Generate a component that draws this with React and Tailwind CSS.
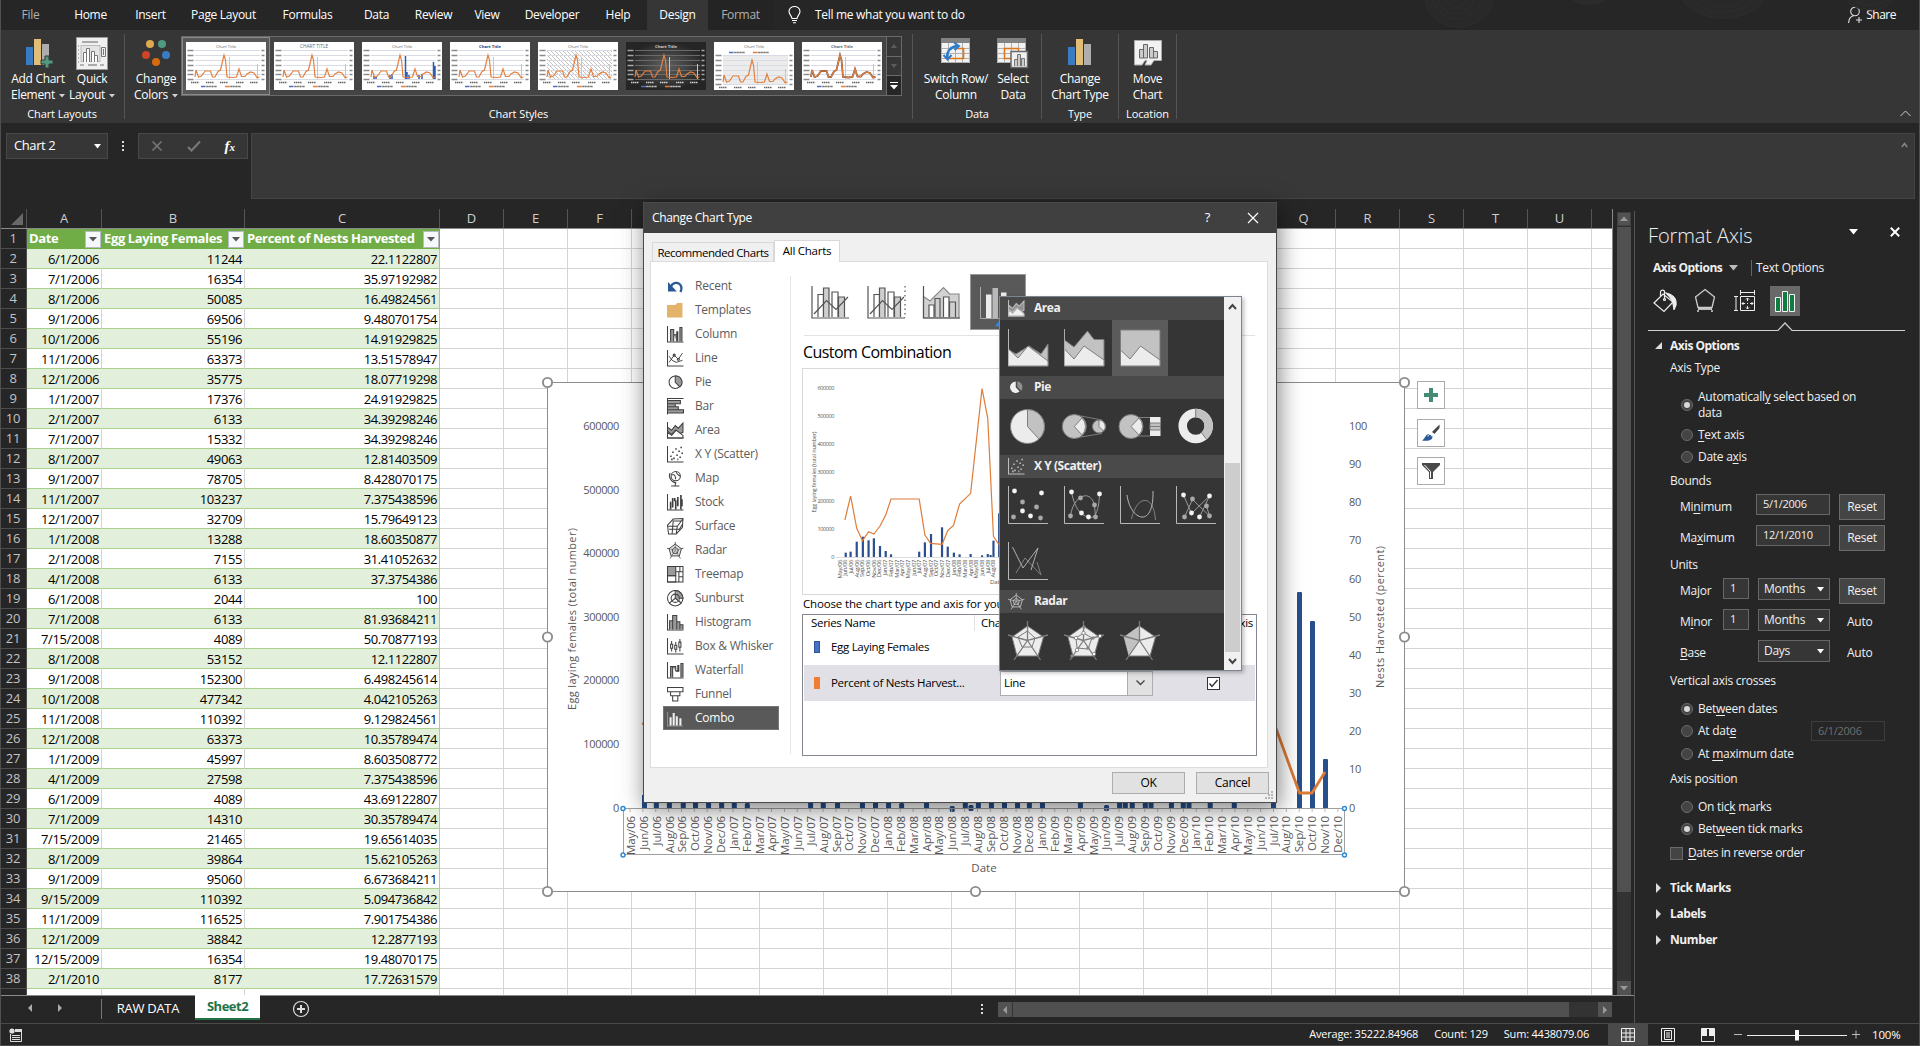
import React from "react";

const ROWS = `6/1/2006 11244 22.1122807
7/1/2006 16354 35.97192982
8/1/2006 50085 16.49824561
9/1/2006 69506 9.480701754
10/1/2006 55196 14.91929825
11/1/2006 63373 13.51578947
12/1/2006 35775 18.07719298
1/1/2007 17376 24.91929825
2/1/2007 6133 34.39298246
7/1/2007 15332 34.39298246
8/1/2007 49063 12.81403509
9/1/2007 78705 8.428070175
11/1/2007 103237 7.375438596
12/1/2007 32709 15.79649123
1/1/2008 13288 18.60350877
2/1/2008 7155 31.41052632
4/1/2008 6133 37.3754386
6/1/2008 2044 100
7/1/2008 6133 81.93684211
7/15/2008 4089 50.70877193
8/1/2008 53152 12.1122807
9/1/2008 152300 6.498245614
10/1/2008 477342 4.042105263
11/1/2008 110392 9.129824561
12/1/2008 63373 10.35789474
1/1/2009 45997 8.603508772
4/1/2009 27598 7.375438596
6/1/2009 4089 43.69122807
7/1/2009 14310 30.35789474
7/15/2009 21465 19.65614035
8/1/2009 39864 15.62105263
9/1/2009 95060 6.673684211
9/15/2009 110392 5.094736842
11/1/2009 116525 7.901754386
12/1/2009 38842 12.2877193
12/15/2009 16354 19.48070175
2/1/2010 8177 17.72631579`.split("\n").map((r) => r.split(" "));

const MONTHS = ["Jan", "Feb", "Mar", "Apr", "May", "Jun", "Jul", "Aug", "Sep", "Oct", "Nov", "Dec"];
const AXIS = Array.from({ length: 56 }, (_, i) => {
  const m = i + 4;
  return `${MONTHS[m % 12]}/${String(6 + Math.floor(m / 12)).padStart(2, "0")}`;
});

/* ---------- title row ---------- */
const TABS = [
  ["File", "w-[59px] text-[#b0b0b0]"],
  ["Home", "w-[61px]"],
  ["Insert", "w-[59px]"],
  ["Page Layout", "w-[87px]"],
  ["Formulas", "w-[81px]"],
  ["Data", "w-[57px]"],
  ["Review", "w-[57px]"],
  ["View", "w-[50px]"],
  ["Developer", "w-[80px]"],
  ["Help", "w-[52px]"],
];

function TopTabs() {
  return (
    <div className="relative flex h-[30px] shrink-0 items-center overflow-hidden text-[12px] tracking-[-0.3px]">
      <svg className="absolute right-0 top-0" width="560" height="30" fill="none" stroke="#2e2e2e">
        <ellipse cx="99" cy="-4" rx="34" ry="31" fill="#292929" />
        <ellipse cx="97" cy="-6" rx="25" ry="25" />
        <ellipse cx="96" cy="-6" rx="18" ry="20" />
        <ellipse cx="96" cy="-7" rx="12" ry="14" />
        <ellipse cx="229" cy="-8" rx="22" ry="12" fill="#2b2b2b" />
        <ellipse cx="363" cy="-8" rx="42" ry="26" fill="#292929" />
        <ellipse cx="363" cy="-10" rx="33" ry="22" />
        <ellipse cx="363" cy="-10" rx="24" ry="17" />
        <ellipse cx="510" cy="-4" rx="24" ry="14" fill="#292929" />
        <ellipse cx="510" cy="-4" rx="16" ry="9" />
      </svg>
      {TABS.map(([t, c]) => (
        <div key={t} className={"flex justify-center pl-0.5 " + c}>{t}</div>
      ))}
      <div className="ml-1 flex h-full w-[61px] items-center justify-center bg-[#363636]">Design</div>
      <div className="flex h-full w-[65px] items-center justify-center bg-[#242424] text-[#b0b0b0]">Format</div>
      <svg className="ml-[15px]" width="13" height="18" viewBox="0 0 13 18" fill="none" stroke="#fff" strokeWidth="1.1">
        <path d="M4 12.500C4 10 1 8.500 1 5.500A5.500 5 0 0 1 12 5.500C12 8.500 9 10 9 12.500ZM4 14.500H9M5 16.800H8" />
      </svg>
      <div className="ml-3.5">Tell me what you want to do</div>
      <div className="ml-auto mr-[24px] flex items-center gap-1 tracking-[-0.5px]">
        <svg width="14" height="18" viewBox="0 0 14 18" fill="none" stroke="#e0e0e0" strokeWidth="1.1">
          <circle cx="7" cy="5.500" r="4.300" />
          <path d="M.6 17C.8 13 3 10.500 5.500 9.800M11 11V17M8 14H14" />
        </svg>
        Share
      </div>
    </div>
  );
}

/* ---------- ribbon ---------- */
const LINE = "9,35 10,28 12.500,35 15.500,34 19,29 24.500,29 26.500,35 29,35 32,29.500 34.500,28 38,13 39.500,18 41,35 46.500,35.500 50.500,35 53,27 55.500,34.500 59,34.500 61,32 64.500,30 68,31 71,35.500 73.500,35";

function Thumb({ kind }) {
  const dark = kind === 5;
  const low = kind === 6;
  const grid = dark ? "#6a6a6a" : "#d9dce4";
  const ink = dark ? "#d0d0d0" : "#666";
  return (
    <svg width="80" height="48" viewBox="0 0 80 48" className="shrink-0">
      <defs>
        <radialGradient id="thumbDark"><stop offset="0" stopColor="#606060" /><stop offset="1" stopColor="#252525" /></radialGradient>
        <pattern id="thumbHatch" width="4" height="4" patternUnits="userSpaceOnUse"><path d="M0 0L4 4" stroke="#aaa" strokeWidth=".7" /></pattern>
      </defs>
      <rect width="80" height="48" fill={dark ? "url(#thumbDark)" : "#fff"} />
      {kind === 4 && <rect x="9" y="8" width="65" height="29" fill="url(#thumbHatch)" />}
      {low && <rect x="9" y="14" width="65" height="28" fill="#ececec" />}
      <text x="40" y="5.800" fontSize={kind === 1 ? "4.800" : "4.200"} textAnchor="middle" fill={kind === 3 ? "#1f3864" : ink} fontWeight={kind === 3 || kind === 5 || kind === 7 ? "700" : "400"}>
        {kind === 1 ? "CHART TITLE" : "Chart Title"}
      </text>
      <g transform={low ? "translate(0 5)" : undefined}>
        {[8, 13, 18, 23, 28, 32, 37].map((y) => (
          <g key={y}>
            <path d={`M9 ${y}.5H74`} stroke={grid} strokeWidth="1" />
            <path d={`M1.500 ${y}.500H7.500M75.500 ${y}.500H78.500`} stroke={ink} strokeWidth="1.300" opacity=".75" />
          </g>
        ))}
        <path d="M43.500 15V37M71.500 22V37" stroke="#b7c8ea" strokeWidth="1" />
        {kind === 2 && (
          <path d="M12 37V34M14 37V35M28 37V33M30 37V32M43.500 37V14M45 37V30M47 37V33M57 37V33M60 37V32M71.500 37V20M73 37V24" stroke="#2f5bb0" strokeWidth="1.500" />
        )}
        {kind === 7 && <polyline points={LINE} fill="none" stroke="#7d5240" strokeWidth="1.800" />}
        <polyline points={LINE} fill="none" stroke="#e2803f" strokeWidth="1.200" />
        <path d="M5 40.500H13M20 40.500H28M34 40.500H42M50 40.500H58M64 40.500H72" stroke={ink} strokeWidth="1.500" strokeDasharray="1.500 .5" />
      </g>
      <g transform={low ? "translate(0 -34)" : undefined}>
        <path d="M15 44.500H19" stroke="#4472c4" strokeWidth="1.500" />
        <path d="M19.500 44.500H31M43.500 44.500H55" stroke={ink} strokeWidth="1.300" strokeDasharray="1.200 .4" />
        <path d="M39 44.500H43" stroke="#ed7d31" strokeWidth="1.500" />
      </g>
    </svg>
  );
}

function Caret() {
  return <svg width="6" height="4" className="ml-1 inline-block align-middle"><path d="M0 0H6L3 3.500Z" fill="#d0d0d0" /></svg>;
}

function BigButton({ icon, lines, caret, w }) {
  return (
    <div className={"flex flex-col items-center " + w}>
      <div className="mt-[2px] flex h-[34px] items-center justify-center">{icon}</div>
      <div className="mt-px whitespace-nowrap text-center text-[12px] leading-4 tracking-[-0.3px]">
        {lines[0]}<br />{lines[1]}{caret && <Caret />}
      </div>
    </div>
  );
}

function Group({ label, w, children }) {
  return (
    <div className={"flex shrink-0 flex-col justify-between border-r border-[#555] " + w}>
      <div className="flex">{children}</div>
      <div className="text-center text-[11px] leading-[10px] tracking-[-0.1px]">{label}</div>
    </div>
  );
}

const ColumnsIcon = ({ plus }) => (
  <svg width="32" height="34" viewBox="-3 -1 32 34">
    <path d="M1 10H8V28H1Z" fill="#3a7cc4" />
    <path d="M9 2H16V28H9Z" fill="#e1bd76" />
    <path d="M17 7H24V28H17Z" fill="#aeaeae" />
    {plus && <path d="M20 19H24V23H28V27H24V31H20V27H16V23H20Z" fill="#4f9a80" stroke="#363636" />}
  </svg>
);

const QuickIcon = (
  <svg width="32" height="33" viewBox="0 0 32 33" fill="none" stroke="#777">
    <rect x=".5" y=".5" width="31" height="32" fill="#f0f0f0" stroke="#999" />
    <path d="M6 5H22M12 28H21" strokeWidth="2" stroke="#aaa" />
    <path d="M2 9H3M2 13H3M2 17H3M2 21H3M2 25H3M4 28H8M24 28H28" />
    <rect x="5" y="8.500" width="19" height="16" fill="#e4e4e4" stroke="#bbb" />
    <path d="M7.500 25V15.500H10.500V25M10.500 25V11.500H13.500V25M15.500 25V14.500H18.500V25M18.500 25V18.500H21.500V25" fill="#fff" />
    <path d="M25.500 10.500H29.500V19.500H25.500ZM27.500 12V18" />
  </svg>
);
const ColorsIcon = (
  <svg width="30" height="30" viewBox="0 0 30 30">
    <circle cx="9" cy="6" r="4" fill="#dfa94f" /><circle cx="21" cy="6" r="4" fill="#4f9a80" />
    <circle cx="5" cy="17" r="4" fill="#cd4426" /><circle cx="25" cy="17" r="4" fill="#3a7cc4" />
    <circle cx="15" cy="24" r="4" fill="#d9690f" />
  </svg>
);
const TableBase = () => (
  <>
    <path d="M0 0H29V25H0Z" fill="#f2f2f2" />
    <path d="M0 0H29V5H0Z" fill="#828282" />
    <path d="M.5 5V24.500H28.500V5M0 10.500H29M0 15.500H29M0 20.500H29M7.500 5V25M14.500 5V25M21.500 5V25" stroke="#b0b0b0" fill="none" />
  </>
);
const SwitchIcon = (
  <svg width="30" height="32" viewBox="0 -1 30 32">
    <TableBase />
    <path d="M15 10.500H22.500V20.500H8" fill="none" stroke="#e0761a" strokeWidth="1.600" />
    <path d="M6 20C6 13 9 9 16 8" fill="none" stroke="#2f7ac6" strokeWidth="2.400" />
    <path d="M13 4.500L18 8L13.500 12M2.500 17L6.500 21.500L10.500 17" fill="none" stroke="#2f7ac6" strokeWidth="2" />
  </svg>
);
const SelectIcon = (
  <svg width="32" height="32" viewBox="0 -1 32 32">
    <TableBase />
    <path d="M7.500 10.500H21.500V20.500H7.500Z" fill="none" stroke="#e0761a" strokeWidth="1.500" />
    <path d="M14 13.500H30.500V29.500H14Z" fill="#f0f0f0" stroke="#6a6a6a" strokeWidth="1.500" />
    <path d="M17.500 28V21.500H20.500V28M20.500 28V16.500H23.500V28M24.500 28V20.500H27.500V28" fill="#ccc" stroke="#777" />
  </svg>
);
const MoveIcon = (
  <svg width="28" height="26" viewBox="0 0 28 26">
    <path d="M.5 .5H27.500V20.500H20L17 25H11L13 20.500H11L8 25H.5Z" fill="#f2f2f2" stroke="#aaa" />
    <path d="M5.500 18V9.500H9.500V18ZM9.500 18V4.500H13.500V18ZM15.500 18V7.500H19.500V18ZM19.500 18V11.500H23.500V18Z" fill="#ccc" stroke="#666" />
  </svg>
);

function Ribbon() {
  return (
    <div className="relative flex h-[93px] shrink-0 bg-[#363636] pb-[4px] pt-[4px]">
      <Group label="Chart Layouts" w="w-[125px]">
        <BigButton w="w-[60px] ml-[8px]" icon={<ColumnsIcon plus />} lines={["Add Chart", "Element"]} caret />
        <BigButton w="w-[48px]" icon={QuickIcon} lines={["Quick", "Layout"]} caret />
      </Group>
      <Group label="Chart Styles" w="w-[788px]">
        <BigButton w="w-[56px] pl-[6px]" icon={ColorsIcon} lines={["Change", "Colors"]} caret />
        <div className="mt-[2px] flex h-[60px] w-[721px] border border-[#6a6a6a] bg-[#444]">
          <div className="flex flex-1">
            {[0, 1, 2, 3, 4, 5, 6, 7].map((k) => (
              <div key={k} className={"flex h-[58px] w-[88px] shrink-0 items-center justify-center border " + (k === 0 ? "border-[#8a8a8a] bg-[#585858]" : "border-transparent")}>
                <Thumb kind={k} />
              </div>
            ))}
          </div>
          <div className="flex w-[15px] flex-col border-l border-[#6a6a6a] bg-[#363636]">
            <div className="flex flex-1 items-center justify-center border-b border-[#6a6a6a]"><svg width="6" height="4"><path d="M0 4H6L3 0Z" fill="#5c5c5c" /></svg></div>
            <div className="flex flex-1 items-center justify-center border-b border-[#6a6a6a]"><svg width="6" height="4"><path d="M0 0H6L3 4Z" fill="#5c5c5c" /></svg></div>
            <div className="flex flex-1 items-center justify-center bg-[#262626]"><svg width="8" height="8"><path d="M0 .5H8" stroke="#fff" /><path d="M0 3H8L4 7.500Z" fill="#fff" /></svg></div>
          </div>
        </div>
      </Group>
      <Group label="Data" w="w-[129px]">
        <BigButton w="w-[72px] ml-[7px]" icon={SwitchIcon} lines={["Switch Row/", "Column"]} />
        <BigButton w="w-[42px]" icon={SelectIcon} lines={["Select", "Data"]} />
      </Group>
      <Group label="Type" w="w-[77px]">
        <BigButton w="w-[76px]" icon={<ColumnsIcon />} lines={["Change", "Chart Type"]} />
      </Group>
      <Group label="Location" w="w-[58px]">
        <BigButton w="w-[57px]" icon={MoveIcon} lines={["Move", "Chart"]} />
      </Group>
      <svg className="mb-[2px] ml-auto mr-[9px] self-end" width="11" height="7" fill="none" stroke="#ccc"><path d="M.5 6L5.500 1L10.500 6" /></svg>
    </div>
  );
}

function FormulaBar() {
  return (
    <div className="flex h-[86px] shrink-0 items-start pl-[6px] pt-[10px]">
      <div className="flex h-[26px] w-[102px] items-center justify-between border border-[#484848] bg-[#363636] pl-[7px] pr-[6px] text-[13px] tracking-[-0.4px]">
        Chart 2
        <svg width="7" height="5"><path d="M0 0H7L3.500 4.500Z" fill="#fff" /></svg>
      </div>
      <svg className="mx-[13px] mt-[8px]" width="4" height="12" fill="#ddd"><path d="M1 0H3V2H1ZM1 4H3V6H1ZM1 8H3V10H1Z" /></svg>
      <div className="flex h-[26px] w-[110px] items-center justify-around border border-[#484848] bg-[#363636]">
        <svg width="12" height="12" fill="none" stroke="#777" strokeWidth="1.600"><path d="M1.500 1.500L10.500 10.500M10.500 1.500L1.500 10.500" /></svg>
        <svg width="14" height="12" fill="none" stroke="#777" strokeWidth="2.200"><path d="M1 7L4.500 10.500L13 1.500" /></svg>
        <span className="font-['Liberation_Serif',serif] text-[15px] font-bold italic leading-none">f<span className="text-[11px]">x</span></span>
      </div>
      <div className="ml-[3px] flex h-[66px] w-[1664px] justify-end border border-[#444] bg-[#383838] pr-[6px] pt-[8px]">
        <svg width="7" height="6" fill="none" stroke="#888" strokeWidth="1.500"><path d="M.8 5L3.500 1.500L6.200 5" /></svg>
      </div>
    </div>
  );
}

/* ---------- worksheet ---------- */
const LETTERS = "DEFGHIJKLMNOPQRSTU".split("");

function FilterButton() {
  return (
    <div className="flex h-[17px] w-[16px] shrink-0 items-center justify-center border border-[#b5bcc4] bg-[#f7f8fa]">
      <svg width="8" height="5"><path d="M0 0H8L4 4.500Z" fill="#555" /></svg>
    </div>
  );
}

function HeadCell({ w, children }) {
  return (
    <div className={"flex h-full shrink-0 items-center justify-between whitespace-nowrap border-b border-[#70ad47] bg-[#70ad47] pl-[2px] pr-px pt-px text-[13px] font-bold tracking-[-0.37px] text-white " + w}>
      {children}<FilterButton />
    </div>
  );
}

function Sheet() {
  return (
    <div className="relative h-[786px] w-[1613px] overflow-hidden border-r border-[#8a8a8a]">
      <div className="flex h-[20px] items-center border-b border-[#8a8a8a] text-[13px] text-[#cfcfcf]">
        <div className="flex h-full w-[27px] shrink-0 items-end justify-end border-r border-[#555] pb-[3px] pr-[3px]">
          <svg width="12" height="12"><path d="M12 0V12H0Z" fill="#686868" /></svg>
        </div>
        <div className="flex h-full w-[75px] shrink-0 items-center justify-center border-r border-[#555]">A</div>
        <div className="flex h-full w-[143px] shrink-0 items-center justify-center border-r border-[#555]">B</div>
        <div className="flex h-full w-[195px] shrink-0 items-center justify-center border-r border-[#555]">C</div>
        {LETTERS.map((l) => (
          <div key={l} className="flex h-full w-[64px] shrink-0 items-center justify-center border-r border-[#555]">{l}</div>
        ))}
      </div>
      {Array.from({ length: 39 }, (_, i) => {
        const r = ROWS[i - 1] || [];
        const band = i % 2 === 1;
        const cell = "flex h-full shrink-0 items-center justify-end border-b border-b-[#a9d08e] border-r pr-[2px] pt-[1.5px] text-[13px] tracking-[-0.4px] ";
        const tone = band ? "bg-[#e2efda] border-r-[#e2efda] " : "bg-white border-r-[#d4d4d4] ";
        return (
          <div key={i} className="flex h-[20px] text-black">
            <div className="flex h-full w-[27px] shrink-0 items-center justify-center border-b border-r border-[#4c4c4c] bg-[#262626] pt-px text-[13px] tracking-[-0.3px] text-[#c4c4c4]">{i < 38 ? i + 1 : ""}</div>
            {i === 0 ? (
              <>
                <HeadCell w="w-[75px]">Date</HeadCell>
                <HeadCell w="w-[143px]">Egg Laying Females</HeadCell>
                <HeadCell w="w-[195px]">Percent of Nests Harvested</HeadCell>
              </>
            ) : (
              <>
                <div className={cell + tone + "w-[75px]"}>{r[0]}</div>
                <div className={cell + tone + "w-[143px]"}>{r[1]}</div>
                <div className={"flex h-full w-[195px] shrink-0 items-center justify-end border-b border-r border-[#a9d08e] pr-[2px] pt-[1.5px] text-[13px] tracking-[-0.4px] " + (band ? "bg-[#e2efda]" : "bg-white")}>{r[2]}</div>
              </>
            )}
            {LETTERS.map((l) => (
              <div key={l} className="h-full w-[64px] shrink-0 border-b border-r border-[#d4d4d4] bg-white" />
            ))}
            <div className="h-full w-[30px] shrink-0 border-b border-[#d4d4d4] bg-white" />
          </div>
        );
      })}
    </div>
  );
}

/* ---------- embedded chart ---------- */
const STUBS = [11, 40, 72, 106, 136, 168, 200, 231, 418, 449, 484, 545, 577, 609, 702, 797, 829, 861, 893, 925, 954, 986, 1079, 1175, 1189, 1206, 1238, 1252, 1302, 1331, 1345, 1397, 1456, 1552];
const SHORT_STUBS = [[263, 803], [641, 803], [765, 806], [811, 805], [1143, 805]];

function SheetChart() {
  return (
    <svg className="absolute left-[541px] top-[376px]" width="870" height="522" viewBox="541 376 870 522">
      <rect x="547.500" y="382.500" width="857" height="509" fill="#fff" stroke="#8c8c8c" />
      <g fontSize="11" fill="#595959" letterSpacing="-.35">
        {[0, 1, 2, 3, 4, 5, 6].map((i) => (
          <text key={i} x="619" y={811.5 - i * 63.600} textAnchor="end">{i ? i + "00000" : "0"}</text>
        ))}
        {[0, 1, 2, 3, 4, 5, 6, 7, 8, 9, 10].map((i) => (
          <text key={i} x="1349" y={811.5 - i * 38.150}>{i * 10}</text>
        ))}
        <text x="984" y="872" textAnchor="middle" fontSize="11.500" letterSpacing="0">Date</text>
        <text transform="translate(576 619) rotate(-90)" textAnchor="middle" letterSpacing="0" textLength="182">Egg laying females (total number)</text>
        <text transform="translate(1384 617) rotate(-90)" textAnchor="middle" letterSpacing="0" textLength="142">Nests Harvested (percent)</text>
      </g>
      <g fill="#264f8c">
        {STUBS.map((x) => <rect key={x} x={640 + x / 2.45 - 2.500} y="795" width="5" height="13.500" />)}
        {SHORT_STUBS.map(([x, y]) => <rect key={x} x={640 + x / 2.45 - 2.500} y={y} width="5" height="6" rx="1.500" />)}
        <rect x="1297" y="592" width="5" height="217" rx="1" />
        <rect x="1310" y="621" width="5" height="188" rx="1" />
        <rect x="1323" y="759" width="5" height="50" rx="1" />
      </g>
      <path d="M643 725L648 715M1270 712L1299.500 793H1312L1325 772" fill="none" stroke="#dd7a36" strokeWidth="2.800" strokeLinejoin="round" />
      <rect x="623.500" y="808.500" width="721" height="46" fill="none" stroke="#a0a0a0" />
      <g fontSize="11.500" fill="#595959" letterSpacing="-.15">
        {AXIS.map((m, i) => (
          <g key={m}>
            <path d={`M${630 + i * 12.870} 809V812`} stroke="#bbb" />
            <text transform={`translate(${635 + i * 12.850} 816) rotate(-90)`} textAnchor="end">{m}</text>
          </g>
        ))}
      </g>
      {[[623, 808.500], [1344.500, 808.500], [623, 855], [1344.500, 855]].map(([x, y]) => (
        <circle key={x + "-" + y} cx={x} cy={y} r="2" fill="#fff" stroke="#2b87d3" strokeWidth="1.400" />
      ))}
      {[[547.500, 382.500], [1404.500, 382.500], [547.500, 637], [1404.500, 637], [547.500, 891.500], [975.500, 891.500], [1404.500, 891.500]].map(([x, y]) => (
        <circle key={x + "-" + y} cx={x} cy={y} r="4.600" fill="#fff" stroke="#8c8c8c" strokeWidth="1.900" />
      ))}
    </svg>
  );
}

function ChartButtons() {
  const box = "flex h-[28px] w-[28px] items-center justify-center border border-[#ababab] bg-white";
  return (
    <div className="absolute left-[1417px] top-[381px] flex flex-col gap-[10px]">
      <div className={box}><svg width="14" height="14"><path d="M5 0H9V5H14V9H9V14H5V9H0V5H5Z" fill="#458a72" /></svg></div>
      <div className={box}>
        <svg width="18" height="18" viewBox="0 0 18 18">
          <path d="M17.500 .5V4L12.500 10L10 8Z" fill="#444" />
          <path d="M9.500 8.500L12.500 11" stroke="#fff" />
          <path d="M0 16.500C3 15 3 10.500 7 10L10.500 12C11 16 7 17.500 0 16.500Z" fill="#2a5a96" />
          <path d="M6 12.500C6 10 9 9.500 10 12.500" fill="none" stroke="#fff" />
        </svg>
      </div>
      <div className={box}>
        <svg width="18" height="17" viewBox="0 0 18 17">
          <path d="M0 0H18V2L11 9V16H7V9L0 2Z" fill="#4a4a4a" />
          <path d="M2.500 2L8.500 8.500V15" fill="none" stroke="#fff" />
        </svg>
      </div>
    </div>
  );
}

/* ---------- category glyphs, 16x16 ---------- */
const Ax = () => <path d="M.5 0V15.500H16" />;
function Glyph({ name, lit }) {
  const ink = lit ? "#bdbdbd" : "#404040";
  const mid = lit ? "#8f8f8f" : "#9a9a9a";
  const pale = lit ? "#f0f0f0" : "#fff";
  const star = "M8 0V8L16 6M8 8L13 16M8 8L3 16M8 8L0 6";
  const g = {
    Recent: <><path d="M3.500 9.500C5 4 11 3 13.500 7.500C14.500 9.500 14 11.500 13 13.500" stroke="#2a5a96" strokeWidth="2.200" /><path d="M1 4V13H9.500Z" fill="#2a5a96" stroke="none" /></>,
    Templates: <path d="M0 3H8L10 1H15V15H0Z" fill="#e3b36b" stroke="none" />,
    Column: <><Ax /><path d="M3.500 15V3.500H6.500V15M6.500 8.500H9.500V15M9.500 15V5.500H10.500V15M12.500 15V1.500H14.500V15" fill={mid} /></>,
    Line: <><Ax /><path d="M2 12L7 5L11 9L15 3M2 6L5 10L9 12L15 10" stroke={ink} strokeWidth=".9" /><circle cx="7" cy="5" r="1" /><circle cx="11" cy="9" r="1" /></>,
    Pie: lit ? <><path d="M7.500 2.500A5.500 5.500 0 1 0 11.200 12.100L7.500 8Z" fill={pale} stroke="none" /><path d="M9 2.500A5.500 5.500 0 0 1 12.700 11.500L9 7.500Z" fill={mid} stroke="none" /></> : <><circle cx="8" cy="8" r="6" fill={pale} /><path d="M8 2V8L12.500 12.500A6 6 0 0 0 8 2Z" fill={mid} /></>,
    Bar: <><path d="M.5 0V16M0 .5H16" /><path d="M1 2.500H13V5.500H1M1 5.500H8V8.500H1M1 8.500H11V11.500H1M1 11.500H16V14.500H1" fill={mid} /></>,
    Area: <><path d="M.5 5L4.500 8L8 3.500L11 6L15.500 1V10L11 12L8 8L4.500 12L.5 9Z" fill={mid} /><path d="M.5 10L4.500 13L9 8L15.500 13V15.500H.5Z" fill={pale} /><Ax /></>,
    "X Y (Scatter)": <><Ax /><path d="M3 10H4.500M5 6H6.500M6 12H7.500M8 3H9.500M9 9H10.500M11 5H12.500M12 11H13.500M13 1.500H14.500M14 7H15.500M4 13H5.500M10 13H11" strokeWidth="1.500" /></>,
    Map: <><circle cx="8.500" cy="6" r="4.500" /><path d="M5 5C7 3 9 7 8 9M9 2C10 5 12 5 12.500 6M3 3C1 7 4 12 9 12.500M8 12.500V15M4 15.500H12" /></>,
    Stock: <><Ax /><path d="M3.500 15V8M5.500 13V4M8.500 15V6M10.500 12V3M13.500 15V1M14.500 12V5M3 8H4M7.500 4V7" strokeWidth="1.600" /></>,
    Surface: <><path d="M1.500 15.500L.5 7L6 1L15.500 .5L15 9L9 15.500ZM1 8L10 8L15.500 1M9 15L10 8M5 15L6 3L14 3M2 11L12 11L15 6" /></>,
    Radar: <><path d={star} strokeWidth=".8" /><path d="M8 2L14 6.500L12 13.500H4L2 6.500ZM8 5L11 7.500L10 11H6L5 7.500Z" strokeWidth=".9" fill={lit ? "none" : "#c5c5c5"} fillOpacity=".5" /></>,
    Treemap: <><path d="M.5 .5H15.500V15.500H.5Z" fill={pale} /><path d="M.5 .5H8.500V9.500H.5Z" fill={mid} /><path d="M.5 9.500H8.500V15.500H.5ZM8.500 5.500H15.500M11.500 5.500V15.500M11.500 10.500H15.500M12.500 .5V5" /></>,
    Sunburst: <><circle cx="8" cy="8" r="7.500" fill={pale} /><circle cx="8" cy="8" r="4" /><path d="M8 .5V8L14 13M8 8L2 13M8 .5A7.500 7.500 0 0 1 15.500 8H12A4 4 0 0 0 8 4Z" fill={mid} /></>,
    Histogram: <><path d="M.5 0V15.500H16" /><path d="M2.500 15V6.500H5.500V15M5.500 15V1.500H9.500V15M9.500 15V7.500H12.500V15M12.500 15V10.500H15.500V15" fill={mid} /></>,
    "Box & Whisker": <><Ax /><path d="M4.500 3V13M8.500 4V14M12.500 1V13" /><path d="M3.500 6H5.500V10H3.500ZM7.500 7H9.500V11H7.500ZM11.500 4H13.500V9H11.500Z" fill={pale} /></>,
    Waterfall: <><Ax /><path d="M3.500 15V4.500H5.500V15M5.500 4.500H8.500V8.500H10.500V3.500H11.500V9H8.500M13.500 15V1.500H15.500V15" fill={mid} /></>,
    Funnel: <><path d="M.5 1.500H15.500V5.500H.5ZM3.500 5.500H12.500V9.500H3.500ZM5.500 9.500H10.500V14.500H5.500Z" fill={pale} /></>,
    Combo: <><path d="M.5 2V15.500H15.500" stroke={mid} /><path d="M3.500 15V7M6.500 15V3M9.500 15V6M13 15V8" stroke={pale} strokeWidth="2" /></>,
  }[name];
  return <svg width="17" height="17" viewBox="0 0 16.500 16.500" fill="none" stroke={ink} className="shrink-0">{g}</svg>;
}

const KINDS = ["Recent", "Templates", "Column", "Line", "Pie", "Bar", "Area", "X Y (Scatter)", "Map", "Stock", "Surface", "Radar", "Treemap", "Sunburst", "Histogram", "Box & Whisker", "Waterfall", "Funnel", "Combo"];

/* ---------- combo sub-type tiles ---------- */
function ComboBars({ dashed }) {
  return (
    <svg width="56" height="56" fill="#fff" stroke="#555" strokeWidth="1.200">
      <path d="M16 43V20.500H21.500V43M30 43V18H36V43" />
      <path d="M21.500 43V14H27V43M36.500 43V23H42.500V43" fill="#cfcfcf" />
      <path d="M10 12V44H47M12 40L24.500 26.500L34 35.500L46 23" fill="none" />
      {dashed && <path d="M47 12V44" strokeDasharray="1.500 3" />}
    </svg>
  );
}

/* ---------- preview inside the dialog ---------- */
const P_LINE = [[502, 960], [516, 888], [531, 985], [545, 1022], [560, 995], [573, 1002], [588, 978], [602, 945], [615, 897], [684, 897], [698, 1005], [712, 1030], [740, 1033], [754, 992], [768, 976], [783, 912], [810, 880], [838, 566], [852, 655], [866, 1010], [882, 1038]];
const P_BARS = [[504, 1058], [516, 1055], [531, 1025], [546, 1010], [560, 1021], [573, 1015], [588, 1038], [602, 1053], [615, 1063], [684, 1055], [698, 1027], [713, 1002], [740, 982], [754, 1040], [769, 1058], [783, 1063], [810, 1062], [838, 1066], [852, 1062], [859, 1065], [866, 1022], [880, 940]];

function Preview() {
  return (
    <svg width="430" height="227" viewBox="802 368 430 227" className="block">
      <rect x="802.500" y="368.500" width="429" height="226" fill="#fff" stroke="#d9d9d9" />
      <g fill="#555" fontSize="5.500" letterSpacing="-.4">
        {[0, 1, 2, 3, 4, 5, 6].map((i) => (
          <text key={i} x="834" y={559 - i * 28.200} textAnchor="end">{i ? i + "00000" : "0"}</text>
        ))}
        {AXIS.slice(0, 28).map((m, i) => (
          <text key={m} transform={`translate(${841.500 + i * 5.700} 560) rotate(-90)`} textAnchor="end" fontSize="6">{m}</text>
        ))}
        <text x="990" y="584" fontSize="6" letterSpacing="0">Date</text>
        <text transform="translate(816 472) rotate(-90)" textAnchor="middle" fontSize="5.500" textLength="81" letterSpacing="0">Egg laying females (total number)</text>
      </g>
      <path d="M836 557.500H1010" stroke="#ddd" />
      {P_BARS.map(([x, y]) => (
        <path key={x} d={`M${640 + x / 2.45} ${200 + y / 3}V557`} stroke="#2b4f8f" strokeWidth="2.200" />
      ))}
      <polyline points={P_LINE.map(([x, y]) => `${640 + x / 2.45},${200 + y / 3}`).join(" ")} fill="none" stroke="#df7c3a" strokeWidth="1.200" />
    </svg>
  );
}

/* ---------- chart-type drop-down ---------- */
const L = "#ececec";
const G = "#c2c2c2";
const D = "#7c7c7c";
function Dots({ w, g }) {
  return (
    <g stroke="none">
      {w.map(([x, y]) => <circle key={x + "," + y} cx={x} cy={y} r="2.400" fill="#f4f4f4" />)}
      {g.map(([x, y]) => <circle key={x + "," + y} cx={x} cy={y} r="2.400" fill="#a8a8a8" />)}
    </g>
  );
}
const AxL = () => <path d="M8.500 8V45.500H48" stroke="#b8b8b8" />;
const Star = ({ rear }) => (
  <>
    <path d="M27.500 13L43.500 24L38 43H17L12 24Z" fill={L} />
    {rear && <path d="M27.500 13V27.500L17 43L12 24Z" fill={G} stroke="none" />}
    <path d="M27.500 8V27.500L48 22M27.500 27.500L40.500 47M27.500 27.500L14 47M27.500 27.500L8 22" stroke={D} strokeWidth="1.300" />
  </>
);
const TILES = {
  Area: [
    <><path d="M8.500 30L16 34L29 26L41 34L48 24V46H8.500Z" fill={G} /><path d="M8.500 29L18 38L28 26L48 41V46H8.500Z" fill={L} /><path d="M8.500 9V46" stroke="#b8b8b8" /></>,
    <><path d="M8.500 20L18 27L31.500 11L38 19.500H48V46H8.500Z" fill={G} /><path d="M8.500 29L18 39L28 26L48 40V46H8.500Z" fill={L} /><path d="M8.500 9V46" stroke="#aaa" /></>,
    <><path d="M8.500 10H48V46H8.500Z" fill={G} /><path d="M8.500 30L18 39L28.500 26L48 40V46H8.500Z" fill={L} /></>,
  ],
  Pie: [
    <><circle cx="27.500" cy="27.500" r="17" fill={L} /><path d="M27.500 10.500V27.500L39 40A17 17 0 0 0 27.500 10.500Z" fill={G} /></>,
    <><path d="M22 16.500L46 21M22 38.500L46 34.500" /><circle cx="18.300" cy="27.500" r="12" fill={G} /><path d="M18.300 27.500L26 19A12 12 0 0 1 26 36Z" fill={L} /><circle cx="43" cy="27.500" r="6.500" fill={G} /><path d="M43 27.500V21A6.500 6.500 0 0 1 47.500 32Z" fill={L} /></>,
    <><path d="M22 18.500H38M22 37H38" /><circle cx="19" cy="27.500" r="12" fill={G} /><path d="M19 27.500L27 19A12 12 0 0 1 27 36Z" fill={L} /><path d="M38 18H48.500V37H38Z" fill={L} stroke="none" /><path d="M38 24H48.500V31H38Z" fill={G} /><path d="M38 27.500H48.500" /></>,
    <><circle cx="27.700" cy="27" r="13" stroke={L} strokeWidth="8.500" /><path d="M27.700 14A13 13 0 0 1 36 37" stroke={G} strokeWidth="8.500" /><path d="M27.700 9V19M33 33L39 41" /></>,
  ],
  "X Y (Scatter)": [
    <><AxL /><Dots w={[[14.5, 13], [41.5, 15], [22.5, 33], [30.5, 38]]} g={[[22.5, 24], [36.5, 29], [13.5, 39], [40.5, 40]]} /></>,
    <><AxL /><path d="M14.500 38C17 18 34 10 38.500 27L39.500 39M15.500 14C18 28 24 38 32.500 39C40 42 43 30 43.500 16" stroke="#999" /><Dots w={[[15.5, 14], [43.5, 16], [25.5, 35], [32.5, 39]]} g={[[24.5, 20], [38.5, 27], [14.5, 38], [39.5, 39]]} /></>,
    <><AxL /><path d="M19.500 41C25 16 42 16 43.500 42" stroke="#808080" /><path d="M15 17C18 42 42 52 41 13" stroke="#b8b8b8" /></>,
    <><AxL /><path d="M16.500 39L24.500 21.500L41.500 38L38.500 28M15.500 17L23.500 35.500L41.500 18L31.500 39" stroke="#999" /><Dots w={[[15.5, 17], [41.5, 18], [23.5, 35], [31.5, 39]]} g={[[24.5, 21], [38.5, 28], [16.5, 39], [41.5, 38]]} /></>,
    <><AxL /><path d="M16 39L25 24L41 41L37 28" stroke="#808080" /><path d="M12.500 13L23 34L38 14L31 36" stroke="#b0b0b0" /></>,
  ],
  Radar: [
    <><Star /><path d="M27.500 18L35 25L32 34H22L18 24Z" /></>,
    <><Star /><path d="M27.500 20L36 25L32 36L21 35L20 25Z" /><g stroke="#777" strokeWidth=".8" fill="#fff"><circle cx="27.500" cy="20" r="1.700" /><circle cx="21" cy="37" r="1.700" /><circle cx="20" cy="25" r="1.700" /><circle cx="38" cy="41" r="1.700" /><circle cx="44" cy="23" r="1.700" /></g><g stroke="none" fill="#888"><circle cx="28" cy="14" r="1.700" /><circle cx="37" cy="25" r="1.700" /><circle cx="32" cy="35" r="1.700" /><circle cx="16" cy="43" r="1.700" /></g></>,
    <Star rear />,
  ],
};

function TypePopup() {
  return (
    <div className="absolute left-[999px] top-[296px] flex h-[375px] w-[243px] border border-[#7d8590] bg-[#353535] shadow-[2px_2px_4px_rgba(0,0,0,0.25)]">
      <div className="w-[224px]">
        {Object.entries(TILES).map(([name, tiles]) => (
          <div key={name}>
            <div className="flex h-[23px] items-center gap-[9px] bg-[#4a4a4a] pb-px pl-[8px] text-[12px] font-bold tracking-[-0.45px] text-[#f0f0f0]">
              <Glyph name={name} lit />{name}
            </div>
            <div className="flex flex-wrap">
              {tiles.map((t, i) => (
                <div key={i} className={"h-[56px] w-[56px] " + (name === "Area" && i === 2 ? "bg-[#5b5b5b]" : "")}>
                  <svg width="56" height="56" fill="none" stroke={D}>{t}</svg>
                </div>
              ))}
            </div>
          </div>
        ))}
      </div>
      <div className="flex w-[17px] flex-col items-center bg-[#f1f1f1] pt-[6px]">
        <svg width="9" height="7" fill="none" stroke="#444" strokeWidth="2"><path d="M1 6L4.500 2L8 6" /></svg>
        <div className="mt-[153px] h-[189px] w-[15px] bg-[#cdcdcd]" />
        <svg className="mt-[6px]" width="9" height="7" fill="none" stroke="#444" strokeWidth="2"><path d="M1 1L4.500 5L8 1" /></svg>
      </div>
    </div>
  );
}

/* ---------- dialog ---------- */
function Dialog() {
  return (
    <div className="absolute left-[643px] top-[202px] flex h-[601px] w-[634px] flex-col border border-[#4a4a4a] bg-[#f0f0f0] text-[12px] tracking-[-0.25px] text-black shadow-[2px_6px_22px_rgba(0,0,0,0.5)]">
      <div className="flex h-[30px] shrink-0 items-center bg-[#404040] pl-[8px] tracking-[-0.35px] text-white">
        Change Chart Type
        <span className="ml-auto mr-[37px] text-[13px]">?</span>
        <svg className="mr-[17px]" width="12" height="12" stroke="#fff" strokeWidth="1.200"><path d="M1 1L11 11M11 1L1 11" /></svg>
      </div>
      <div className="flex h-[28px] shrink-0 items-end pl-[8px]">
        <div className="flex h-[19px] w-[122px] items-center justify-center border border-b-0 border-[#d9d9d9] pt-0.5 text-[11.5px] tracking-[-0.45px]">Recommended Charts</div>
        <div className="z-10 -mb-px flex h-[22px] w-[66px] items-center justify-center border border-b-0 border-[#d9d9d9] bg-white pb-0.5 text-[11.5px]">All Charts</div>
      </div>
      <div className="mx-[6px] flex h-[507px] w-[618px] shrink-0 border border-[#dcdcdc] bg-white">
        <div className="w-[139px] pl-[12px] pt-[12px] text-[#5c5c5c]">
          {KINDS.map((k) => (
            <div key={k} className={"flex h-[24px] w-[116px] items-center gap-[11px] whitespace-nowrap border pl-[3px] " + (k === "Combo" ? "border-[#777] bg-[#595959] text-white" : "border-transparent")}>
              <Glyph name={k} lit={k === "Combo"} />{k}
            </div>
          ))}
        </div>
        <div className="mt-[14px] h-[478px] w-px bg-[#e6e6e6]" />
        <div className="w-[466px] pl-[11px] pt-[12px]">
          <div className="flex h-[56px]">
            <ComboBars />
            <ComboBars dashed />
            <svg width="56" height="56" fill="#fff" stroke="#555" strokeWidth="1.200">
              <path d="M9.500 22.500L16 27L29.500 13.500L35.500 20H45V44H9.500Z" fill="#d2d2d2" stroke="#888" />
              <path d="M15 43V31H20V43M29.500 43V23H35V43" />
              <path d="M21 43V24.500H26V43M35.500 43V28H41.500V43" fill="#cfcfcf" />
              <path d="M9.500 12V44H46" fill="none" />
            </svg>
            <svg width="56" height="56" className="border border-[#999] bg-[#595959]">
              <path d="M9.500 12V43.500H46" fill="none" stroke="#aaa" />
              <path d="M15 43V19.500H20.500V43ZM30 43V17.500H35.500V43Z" fill="#ececec" />
              <path d="M21.500 43V13H27V43Z" fill="#b9b9b9" />
              <path d="M24 51L28 46L30 52Z" fill="#3a86d6" />
            </svg>
          </div>
          <div className="ml-[2px] mt-[5px] h-px w-[451px] bg-[#e3e3e3]" />
          <div className="flex h-[32px] items-center pl-px text-[16px] tracking-[-0.55px]">Custom Combination</div>
          <Preview />
          <div className="flex h-[19px] items-center whitespace-nowrap pb-px pl-px text-[11.5px] tracking-[-0.15px]">Choose the chart type and axis for your data series:</div>
          <div className="h-[142px] w-[455px] border border-[#828790] bg-white p-px text-[11.5px] tracking-[-0.3px]">
            <div className="flex h-[13px] items-center pl-[7px] pr-[2px]">
              <span className="w-[164px] border-r border-[#e0e0e0] leading-4">Series Name</span>
              <span className="pl-[6px]">Chart Type</span>
              <span className="ml-auto">Secondary Axis</span>
            </div>
            <div className="flex h-[36px] items-center pl-[10px]">
              <span className="h-[12px] w-[6px] border border-[#2f5597] bg-[#4472c4]" />
              <span className="pl-[11px]">Egg Laying Females</span>
            </div>
            <div className="flex h-[36px] items-center bg-[#e0e0e6] pl-[10px]">
              <span className="h-[12px] w-[6px] bg-[#ed7d31]" />
              <span className="w-[180px] pl-[11px]">Percent of Nests Harvest...</span>
              <div className="flex h-[25px] w-[153px] items-center border border-[#adadad] bg-white pl-[3px]">
                Line
                <div className="ml-auto flex h-full w-[25px] items-center justify-center border-l border-[#adadad] bg-[#e1e1e1]">
                  <svg width="9" height="6" fill="none" stroke="#444" strokeWidth="1.300"><path d="M.5 .5L4.500 4.500L8.500 .5" /></svg>
                </div>
              </div>
              <svg className="ml-[54px]" width="13" height="13" fill="#fff" stroke="#333"><rect x=".5" y=".5" width="12" height="12" /><path d="M2.500 6.500L5 9.500L10.500 3" fill="none" strokeWidth="1.400" /></svg>
            </div>
          </div>
        </div>
      </div>
      <div className="mt-[4px] flex justify-end gap-[11px] pr-[7px]">
        <div className="flex h-[22px] w-[73px] items-center justify-center border border-[#adadad] bg-[#e1e1e1]">OK</div>
        <div className="flex h-[22px] w-[73px] items-center justify-center border border-[#adadad] bg-[#e1e1e1]">Cancel</div>
      </div>
      <svg className="absolute bottom-[2px] right-[2px]" width="9" height="9" fill="#b5b5b5"><path d="M6 0H8V2H6ZM3 3H5V5H3ZM6 3H8V5H6ZM0 6H2V8H0ZM3 6H5V8H3ZM6 6H8V8H6Z" /></svg>
    </div>
  );
}

/* ---------- Format Axis pane ---------- */
function Radio({ on, top, children, extra }) {
  return (
    <div className={"flex items-center pl-[46px] " + (top || "h-[22px]")}>
      <span className="flex h-[12px] w-[12px] shrink-0 items-center justify-center rounded-full border border-[#6a6a6a] bg-[#444]">
        {on && <span className="h-[6px] w-[6px] rounded-full bg-[#d8d8d8]" />}
      </span>
      <span className="pl-[5px] leading-4">{children}</span>
      {extra}
    </div>
  );
}
const U = ({ children }) => <span className="underline underline-offset-2">{children}</span>;
const Reset = () => <div className="ml-[9px] flex h-[26px] w-[46px] items-center justify-center border border-[#6a6a6a] bg-[#444]">Reset</div>;
const Input = ({ w, children }) => <div className={"flex h-[21px] items-center self-start border border-[#666] bg-[#363636] pl-[6px] text-[11px] " + w}>{children}</div>;
const Pick = ({ children }) => (
  <div className="ml-[9px] flex h-[22px] w-[72px] items-center justify-between self-start border border-[#666] bg-[#363636] pl-[5px] pr-[5px]">
    {children}<svg width="7" height="5"><path d="M0 0H7L3.500 4.500Z" fill="#fff" /></svg>
  </div>
);

function Section({ children }) {
  return (
    <div className="flex h-[26px] items-center pl-[21px] font-bold tracking-[-0.4px]">
      <svg width="5" height="10" className="mr-[9px]"><path d="M0 0V10L5 5Z" fill="#ddd" /></svg>{children}
    </div>
  );
}

function Pane() {
  return (
    <div className="mt-[2px] flex w-[285px] flex-col border-l border-[#555] text-[12px] tracking-[-0.27px] text-[#f0f0f0]">
      <div className="-mt-[2px] flex h-[53px] shrink-0 items-center pl-[13px] pr-[19px]">
        <span className="text-[20px] font-light tracking-[-0.1px]">Format Axis</span>
        <svg className="-mt-2 ml-auto" width="9" height="6"><path d="M0 0H9L4.500 5.500Z" fill="#fff" /></svg>
        <svg className="-mt-2 ml-[32px]" width="10" height="10" stroke="#fff" strokeWidth="2"><path d="M.8 .8L9.200 9.200M9.200 .8L.8 9.200" /></svg>
      </div>
      <div className="flex h-[12px] items-center pl-[18px]">
        <span className="w-[76px] font-bold tracking-[-0.5px]">Axis Options</span>
        <svg width="9" height="6"><path d="M0 0H9L4.500 5.500Z" fill="#bbb" /></svg>
        <span className="ml-[13px] h-[16px] w-px bg-[#666]" />
        <span className="pl-[4px]">Text Options</span>
      </div>
      <div className="mt-[12px] flex h-[30px] items-center pl-[18px]">
        <svg width="25" height="24" viewBox="0 0 25 24" fill="none" stroke="#eee" strokeWidth="1.200">
          <path d="M1 14L10 5L20 13L11 22.500ZM7.500 8V3C7.500 .5 11.500 .5 11.500 3V10" /><circle cx="11.500" cy="10.500" r="1" /><path d="M13 4C19 5 23 9 23 13C24 17 21 19 21 21C20 15 21 11 13 4Z" fill="#eee" />
        </svg>
        <svg className="ml-[16px]" width="22" height="26" viewBox="0 0 22 26" fill="none" stroke="#ccc" strokeWidth="1.300">
          <path d="M11 1.500L20.500 9L18 19.500H4L1.500 9Z" /><path d="M4 21H18M4 22V24M18 22V24" stroke="#eee" />
        </svg>
        <svg className="ml-[17px]" width="23" height="24" viewBox="0 0 23 24" fill="none" stroke="#eee">
          <path d="M7.500 7.500H21.500V21.500H7.500ZM7.500 1V6M21.500 1V6M7.500 3.500H21.500M1 7.500H5M1 21.500H5M3 7.500V21.500" />
          <path d="M14.500 9V12M14.500 17V20M9 14.500H12M17 14.500H20M13 10.500L14.500 9L16 10.500M13 18.500L14.500 20L16 18.500M10.500 13L9 14.500L10.500 16M18.500 13L20 14.500L18.500 16M14 14.500H15" />
        </svg>
        <div className="ml-[14px] flex h-[30px] w-[30px] items-center justify-center bg-[#696969]">
          <svg width="20" height="23" viewBox="0 0 20 23" fill="#107c41" stroke="#f4f4f4"><path d="M.5 7.500H5.500V21.500H.5ZM7.500 1.500H12.500V21.500H7.500ZM14.500 4.500H19.500V21.500H14.500Z" /></svg>
        </div>
      </div>
      <svg className="ml-[13px] mt-[6px] shrink-0" width="257" height="10" fill="none" stroke="#d0d0d0" strokeWidth="1.200"><path d="M0 8.500H130L137 1L144 8.500H257" /></svg>
      <div className="flex h-[28px] items-center pl-[20px] font-bold tracking-[-0.5px]">
        <svg width="7" height="7" className="mr-[8px] -mt-0.5"><path d="M7 0V7H0Z" fill="#ddd" /></svg>Axis Options
      </div>
      <div className="flex h-[16px] items-center pl-[35px]">Axis Type</div>
      <Radio on top="mt-[12px] h-[34px]">Automaticall<U>y</U> select based on<br />data</Radio>
      <Radio top="mt-[2px] h-[22px]"><U>T</U>ext axis</Radio>
      <Radio>Date a<U>x</U>is</Radio>
      <div className="flex h-[26px] items-center pl-[35px]">Bounds</div>
      <div className="flex h-[26px] items-center pl-[45px]"><span className="w-[76px]">Mi<U>n</U>imum</span><Input w="w-[74px]">5/1/2006</Input><Reset /></div>
      <div className="mt-[5px] flex h-[26px] items-center pl-[45px]"><span className="w-[76px]">Ma<U>x</U>imum</span><Input w="w-[74px]">12/1/2010</Input><Reset /></div>
      <div className="flex h-[27px] items-center pl-[35px]">Units</div>
      <div className="flex h-[26px] items-center pl-[45px]"><span className="w-[43px]">Ma<U>j</U>or</span><Input w="w-[26px]">1</Input><Pick>Months</Pick><Reset /></div>
      <div className="mt-[5px] flex h-[26px] items-center pl-[45px]"><span className="w-[43px]">M<U>i</U>nor</span><Input w="w-[26px]">1</Input><Pick>Months</Pick><span className="pl-[17px]">Auto</span></div>
      <div className="mt-[5px] flex h-[26px] items-center pl-[45px]"><span className="w-[69px]"><U>B</U>ase</span><Pick>Days</Pick><span className="pl-[17px]">Auto</span></div>
      <div className="flex h-[29px] items-center pl-[35px]">Vertical axis crosses</div>
      <Radio on top="mt-[3px] h-[22px]">Bet<U>w</U>een dates</Radio>
      <Radio extra={<div className="ml-auto mr-[34px] flex h-[20px] w-[74px] items-center border border-[#3c3c3c] pl-[6px] text-[11px] text-[#6f6f6f]">6/1/2006</div>}>At dat<U>e</U></Radio>
      <Radio top="mt-[1px] h-[22px]">At <U>m</U>aximum date</Radio>
      <div className="flex h-[28px] items-center pl-[35px]">Axis position</div>
      <Radio top="mt-[3px] h-[22px]">On tic<U>k</U> marks</Radio>
      <Radio on>Bet<U>w</U>een tick marks</Radio>
      <div className="flex h-[26px] items-center pl-[35px] tracking-[-0.38px]">
        <span className="mr-[5px] h-[13px] w-[13px] border border-[#6a6a6a] bg-[#444]" /><U>D</U>ates in reverse order
      </div>
      <div className="mt-[9px]">
        <Section>Tick Marks</Section>
        <Section>Labels</Section>
        <Section>Number</Section>
      </div>
    </div>
  );
}

/* ---------- bars around the sheet ---------- */
function Arrow({ d, c = "#999" }) {
  return <svg width="8" height="8"><path d={d} fill={c} /></svg>;
}

function VScroll() {
  return (
    <div className="ml-[4px] mt-[3px] flex h-[783px] w-[14px] flex-col bg-[#333]">
      <div className="flex h-[14px] items-center justify-center border border-[#3f3f3f] bg-[#525252]"><Arrow d="M0 6H8L4 1.500Z" /></div>
      <div className="mt-px h-[665px] bg-[#505050]" />
      <div className="mt-auto flex h-[14px] items-center justify-center bg-[#525252]"><Arrow d="M0 2H8L4 6.500Z" /></div>
    </div>
  );
}

function SheetTabs() {
  return (
    <div className="flex h-[27px] items-start border-t border-[#8a8a8a]">
      <div className="ml-[27px] mt-[8px] flex gap-[20px]"><Arrow d="M5 0V8L1 4Z" c="#aaa" /><Arrow d="M3 0V8L7 4Z" c="#aaa" /></div>
      <div className="ml-[38px] mt-[3px] h-[20px] w-px bg-[#777]" />
      <div className="flex h-[25px] w-[93px] items-center justify-center pr-px text-[13px] tracking-[-0.3px]">RAW DATA</div>
      <div className="-mt-px flex h-[25px] w-[65px] items-center justify-center border-b-2 border-[#217346] bg-white pt-px text-[13px] font-bold tracking-[-0.5px] text-[#217346]">Sheet2</div>
      <svg className="ml-[32px] mt-[4px]" width="18" height="18" fill="none" stroke="#ddd"><circle cx="9" cy="9" r="7.500" strokeWidth="1.200" /><path d="M9 5V13M5 9H13" strokeWidth="2" /></svg>
      <svg className="ml-[670px] mt-[8px]" width="4" height="12" fill="#ddd"><path d="M1 0H3V2H1ZM1 4H3V6H1ZM1 8H3V10H1Z" /></svg>
      <div className="ml-[14px] mt-[6px] flex h-[15px] w-[614px] bg-[#333]">
        <div className="flex w-[14px] items-center justify-center bg-[#525252]"><Arrow d="M6 0V8L2 4Z" /></div>
        <div className="ml-px w-[556px] bg-[#505050]" />
        <div className="ml-auto flex w-[14px] items-center justify-center bg-[#525252]"><Arrow d="M2 0V8L6 4Z" /></div>
      </div>
    </div>
  );
}

function StatusBar() {
  return (
    <div className="flex h-[23px] shrink-0 items-center border-b border-t border-[#4a4a4a] text-[11px] tracking-[-0.2px]">
      <svg className="ml-[9px]" width="14" height="14" viewBox="0 0 14 14" fill="none" stroke="#ddd">
        <path d="M1.500 6V13.500H12.500V2.500H6M7 2.500H13M3 7.500H11M3 9.500H11M3 11.500H11" /><circle cx="3" cy="3" r="2.600" fill="#ddd" stroke="none" /><path d="M6 1H13V4H6Z" fill="#ddd" stroke="none" />
      </svg>
      <div className="ml-auto flex gap-[16px]"><span>Average: 35222.84968</span><span>Count: 129</span><span>Sum: 4438079.06</span></div>
      <div className="ml-[19px] flex h-full w-[40px] items-center justify-center bg-[#4a4a4a]">
        <svg width="14" height="14" fill="none" stroke="#eee"><path d="M.5 .5H13.500V13.500H.5ZM.5 5H13.500M.5 9H13.500M5 .5V13.500M9 .5V13.500" /></svg>
      </div>
      <svg className="ml-[13px]" width="14" height="14" fill="none" stroke="#eee"><path d="M.5 .5H13.500V13.500H.5ZM3.500 2.500H10.500V11.500H3.500ZM5 5H9M5 7H9M5 9H9" /></svg>
      <svg className="ml-[26px]" width="14" height="14" fill="none" stroke="#eee"><path d="M.5 .5H13.500V13.500H.5Z" /><path d="M1 1H6V8H1ZM8 1H13V8H8Z" fill="#eee" stroke="none" /></svg>
      <svg className="ml-[19px]" width="126" height="14" fill="none" stroke="#eee"><path d="M0 6.500H8M118 6.500H126M122 2.500V10.500" stroke="#bbb" /><path d="M13 7.500H113" /><path d="M61 2H65V12.500H61Z" fill="#fff" stroke="none" /></svg>
      <span className="ml-[12px] mr-[20px] w-[28px] text-[11.5px]">100%</span>
    </div>
  );
}

export default function App() {
  return (
    <div className="relative flex h-[1046px] w-[1920px] flex-col overflow-hidden bg-[#262626] font-['Open_Sans','Noto_Sans',sans-serif] text-white">
      <TopTabs />
      <Ribbon />
      <FormulaBar />
      <div className="flex h-[814px] shrink-0">
        <div className="flex w-[1634px] flex-col">
          <div className="flex"><Sheet /><VScroll /></div>
          <SheetTabs />
        </div>
        <Pane />
      </div>
      <StatusBar />
      <SheetChart />
      <ChartButtons />
      <Dialog />
      <TypePopup />
      <div className="pointer-events-none absolute inset-0 border-l border-r border-[#505050]" />
    </div>
  );
}
